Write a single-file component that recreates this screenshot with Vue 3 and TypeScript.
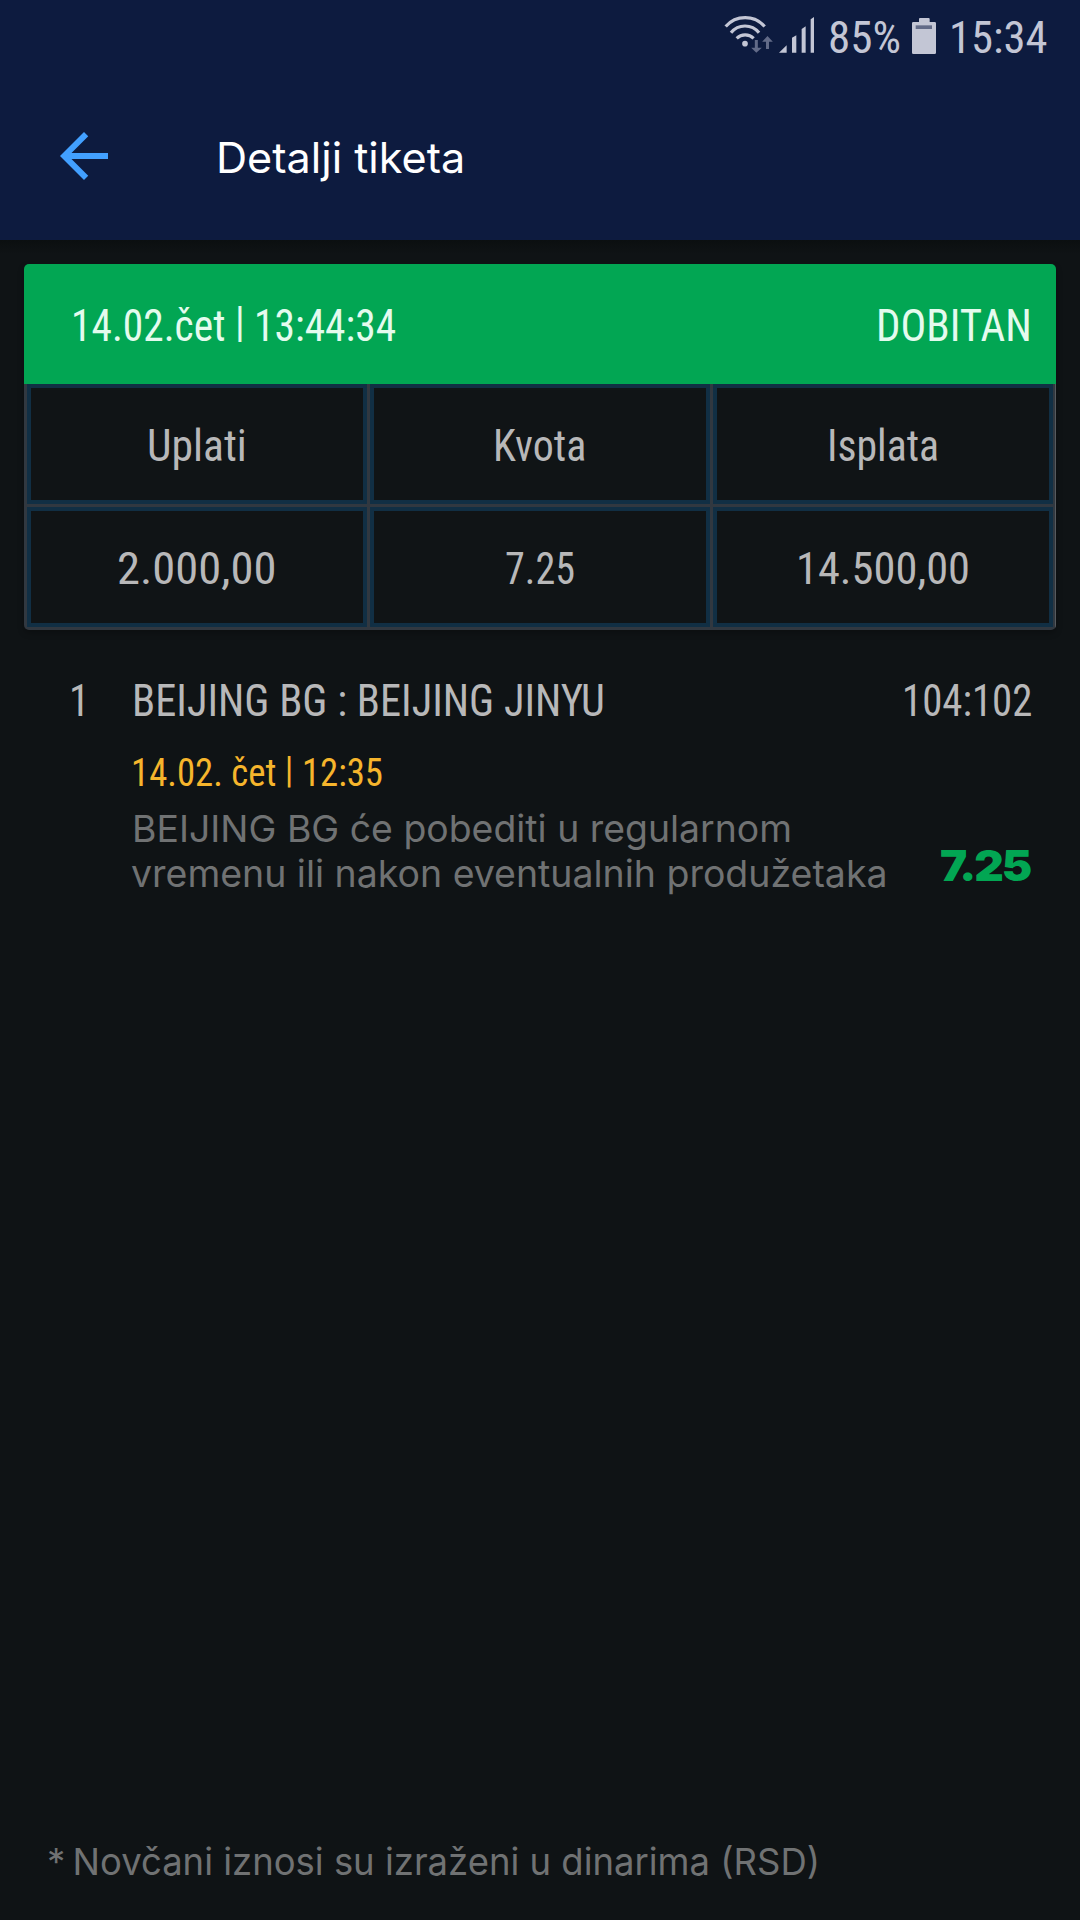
<script setup lang="ts">
interface Stat {
  label: string
  labelWidth: number
  value: string
  valueWidth: number
}

const stats: Stat[] = [
  { label: 'Uplati', labelWidth: 99.8, value: '2.000,00', valueWidth: 159.4 },
  { label: 'Kvota', labelWidth: 93.3, value: '7.25', valueWidth: 70 },
  { label: 'Isplata', labelWidth: 112, value: '14.500,00', valueWidth: 174 },
]

// Stretches a single line of text horizontally to the given width in pixels.
const vFit = {
  mounted(el: HTMLElement, binding: { value: number }) {
    const natural = el.getBoundingClientRect().width
    el.style.transform = `scaleX(${binding.value / natural})`
    el.style.marginRight = `${binding.value - natural}px`
  },
}
</script>

<template>
  <div class="screen">
    <header class="appbar">
      <div class="status">
        <svg class="network" viewBox="40 45 272 120">
          <g fill="none" stroke="#c3c6d5" stroke-width="9.500">
            <path d="M45 79.500A77.500 77.500 0 0 1 162 79.500" />
            <path d="M61 98A54 54 0 0 1 145 98" />
            <path d="M78 115A36 36 0 0 1 129 115" />
          </g>
          <circle cx="103" cy="131" r="8.500" fill="#c3c6d5" />
          <path
            fill="#626b88"
            d="M132.500 120h9v23h12L137 158.500 121.500 143h11zM166 147v-22h-11.500L170.500 108 186.500 125H175v22z"
          />
          <path
            fill="#c3c6d5"
            d="M205 158.500 228 136v22.500zM244 113l13-7v52.500h-13zM273 87l12-8v79.500h-12zM300 58l12-8v108.500h-12z"
          />
        </svg>
        <span v-fit="73" class="status-text percent">85%</span>
        <svg class="battery" viewBox="606 45 72 120">
          <path
            fill="#c3c6d5"
            d="M627 66V57q0-3 3-3h26q3 0 3 3v9h15q4 0 4 4v88q0 4-4 4h-64q-4 0-4-4V70q0-4 4-4z"
          />
          <path fill="#626b88" d="M617 76h49v11h-49z" />
        </svg>
        <span v-fit="98.5" class="status-text">15:34</span>
      </div>
      <div class="toolbar">
        <svg class="back" viewBox="0 0 24 24">
          <path fill="#42a0ff" d="M20 11H7.830l5.590-5.590L12 4l-8 8 8 8 1.410-1.410L7.830 13H20z" />
        </svg>
        <span v-fit="249.2" class="title">Detalji tiketa</span>
      </div>
    </header>

    <main class="content">
      <section class="card">
        <div class="card-head">
          <span v-fit="325.1" class="text">14.02.čet <span class="bar">|</span> 13:44:34</span>
          <span v-fit="155.8" class="text">DOBITAN</span>
        </div>
        <div class="grid">
          <div v-for="s in stats" :key="s.label" class="cell">
            <span v-fit="s.labelWidth" class="text">{{ s.label }}</span>
          </div>
          <div v-for="s in stats" :key="s.value" class="cell">
            <span v-fit="s.valueWidth" class="text">{{ s.value }}</span>
          </div>
        </div>
      </section>

      <section class="match">
        <div class="index"><span v-fit="20.6" class="text">1</span></div>
        <div class="details">
          <div class="teams">
            <span v-fit="472.9" class="text">BEIJING BG : BEIJING JINYU</span>
            <span v-fit="130.3" class="text">104:102</span>
          </div>
          <div class="kickoff">
            <span v-fit="252" class="text small">14.02. čet <span class="bar">|</span> 12:35</span>
          </div>
          <div class="pick">
            <div class="rule">
              <div><span v-fit="660" class="muted">BEIJING BG će pobediti u regularnom</span></div>
              <div><span v-fit="756.5" class="muted second">vremenu ili nakon eventualnih produžetaka</span></div>
            </div>
            <span v-fit="90" class="odds">7.25</span>
          </div>
        </div>
      </section>

      <footer class="note">
        <span v-fit="773" class="muted"><span class="star">*</span> Novčani iznosi su izraženi u dinarima (RSD)</span>
      </footer>
    </main>
  </div>
</template>

<style>
body {
  margin: 0;
  background: #0f1315;
}
</style>

<style scoped>
.screen {
  display: flex;
  flex-direction: column;
  width: 1080px;
  height: 1920px;
  overflow: hidden;
  background: #0f1315;
  font-family: Roboto, 'Liberation Sans', sans-serif;
}

.screen span {
  white-space: pre;
}

.text,
.status-text,
.title,
.muted,
.odds {
  display: inline-block;
  flex: none;
  transform-origin: 0 50%;
}

.appbar {
  flex: none;
  height: 240px;
  background: #0d1b3f;
}

.status {
  display: flex;
  justify-content: flex-end;
  height: 72px;
  padding-right: 33px;
}

.network {
  width: 90.67px;
  height: 40px;
  margin-top: 15px;
}

.battery {
  width: 24px;
  height: 40px;
  margin: 15px 12.2px 0 11.5px;
}

.status-text {
  font-size: 44.5px;
  line-height: 76px;
  font-stretch: 78%;
  color: #c3c6d5;
}

.percent {
  margin-left: 13.5px;
}

.toolbar {
  display: flex;
  align-items: center;
  height: 168px;
  padding-left: 48px;
}

.back {
  width: 72px;
  height: 72px;
  margin-right: 96px;
}

.title {
  padding-top: 3px;
  font-family: Inter, 'Liberation Sans', sans-serif;
  font-size: 42.6px;
  line-height: 60px;
  color: #fff;
}

.content {
  display: flex;
  flex: 1;
  flex-direction: column;
  box-sizing: border-box;
  padding: 24px 24px 28px;
  background: linear-gradient(#0b0f10, #0f1315 14px);
}

.card {
  overflow: hidden;
  border-radius: 5px;
  box-shadow: 0 3px 6px rgba(0, 0, 0, 0.25);
}

.card-head {
  display: flex;
  justify-content: space-between;
  height: 114px;
  padding: 6px 24px 0 46.5px;
  line-height: 114px;
  background: #02a653;
  color: #e4fbee;
}

.text {
  font-size: 43.6px;
  font-stretch: 86%;
}

.bar {
  position: relative;
  top: -0.12em;
  font-size: 0.96em;
  line-height: 1;
}

.grid {
  display: grid;
  grid-template-columns: repeat(3, 340px);
  gap: 3px;
  padding: 0 3px 3px;
  background: #313840;
  box-shadow: inset -1px 0 #565a5e;
}

.cell {
  display: flex;
  justify-content: center;
  box-sizing: border-box;
  height: 120px;
  border: 4px solid #112f44;
  background: #101416;
  line-height: 118px;
  color: #b8b8b9;
}

.match {
  display: flex;
  margin-top: 42px;
  color: #b8b8b9;
}

.index {
  width: 108px;
  box-sizing: border-box;
  padding-left: 44.5px;
  line-height: 60px;
}

.details {
  flex: 1;
  padding-right: 24px;
}

.teams {
  display: flex;
  justify-content: space-between;
  line-height: 60px;
}

.kickoff {
  height: 56px;
  margin: 13px 0 5px -1px;
  line-height: 56px;
  color: #f6b52c;
}

.small {
  font-size: 38px;
}

.pick {
  display: flex;
  justify-content: space-between;
  align-items: flex-end;
}

.rule {
  line-height: 45px;
}

.rule > div {
  height: 45px;
}

.muted {
  font-family: Inter, 'Liberation Sans', sans-serif;
  font-size: 37.1px;
  font-weight: 380;
  color: #707273;
}

.second {
  margin-left: -1px;
}

.odds {
  margin-left: -20px;
  position: relative;
  left: -2px;
  font-family: Inter, 'Liberation Sans', sans-serif;
  font-size: 42.6px;
  font-weight: 900;
  line-height: 60px;
  letter-spacing: -2px;
  color: #02a653;
}

.star {
  letter-spacing: -3px;
}

.note {
  height: 60px;
  margin-top: auto;
  padding-left: 23px;
  line-height: 60px;
}
</style>
